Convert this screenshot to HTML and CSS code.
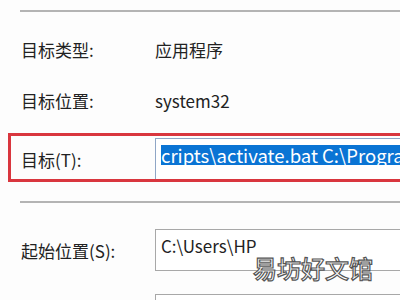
FILE: index.html
```html
<!DOCTYPE html>
<html lang="zh-CN">
<head>
<meta charset="utf-8">
<link rel="stylesheet" href="styles.css">
</head>
<body>
<div class="page">
  <div class="rule"></div>
  <div class="info-row first"><span class="label">目标类型:</span><span class="value">应用程序</span></div>
  <div class="info-row second"><span class="label">目标位置:</span><span class="value">system32</span></div>
  <div class="highlight">
    <span class="label">目标(T):</span>
    <div class="field target"><span class="sel">cripts\activate.bat C:\ProgramData\Anaconda3</span></div>
  </div>
  <div class="rule lower"></div>
  <div class="field-row">
    <span class="label">起始位置(S):</span>
    <div class="field start">C:\Users\HP</div>
  </div>
  <div class="field-row next">
    <span class="label"></span>
    <div class="field start"></div>
  </div>
  <div class="watermark">易坊好文馆</div>
</div>
</body>
</html>
```
FILE: styles.css
```css
html, body {
  margin: 0;
  padding: 0;
  background: #fdfdfd;
  overflow: hidden;
}
.page {
  position: relative;
  width: 400px;
  height: 300px;
  overflow: hidden;
  padding-top: 10px;
  box-sizing: border-box;
  font-family: "Noto Sans CJK SC", "Noto Sans", sans-serif;
  font-size: 17px;
  color: #222;
}
.rule {
  margin-left: 20px;
  height: 2px;
  background: #b4b4b4;
}
.rule.lower {
  margin-top: 19px;
}
.info-row {
  display: flex;
  align-items: center;
  height: 20px;
  margin-left: 21px;
}
.info-row.first { margin-top: 27px; }
.info-row.second { margin-top: 31px; }
.label {
  width: 134px;
  flex: none;
  white-space: nowrap;
}
.value { white-space: nowrap; }
.highlight {
  display: flex;
  align-items: stretch;
  margin-top: 23px;
  margin-left: 8px;
  width: 430px;
  height: 49px;
  box-sizing: border-box;
  border: 3px solid #d9363e;
  padding: 2px 0 0 10px;
}
.highlight .label {
  align-self: center;
  margin-top: 1px;
}
.field {
  flex: none;
  width: 300px;
  box-sizing: border-box;
  border: 1px solid #a8a8a8;
  background: #fff;
  white-space: nowrap;
  overflow: hidden;
}
.field.target {
  border-color: #8fa6c6;
  border-bottom: none;
  padding: 4px 0 0 5px;
}
.sel {
  display: inline-block;
  height: 20px;
  line-height: 20px;
  font-size: 18.5px;
  background: #0a74d4;
  color: #fff;
}
.field-row {
  display: flex;
  align-items: center;
  margin-left: 21px;
}
.rule.lower + .field-row { margin-top: 26px; }
.field-row.next { margin-top: 23px; }
.field.start {
  height: 42px;
  padding: 6px 0 0 5px;
  line-height: 20px;
}
.watermark {
  position: absolute;
  left: 253px;
  top: 252px;
  font-size: 24px;
  line-height: 32px;
  font-weight: 500;
  color: #ffffff;
  -webkit-text-stroke: 1.2px #555;
}
```
